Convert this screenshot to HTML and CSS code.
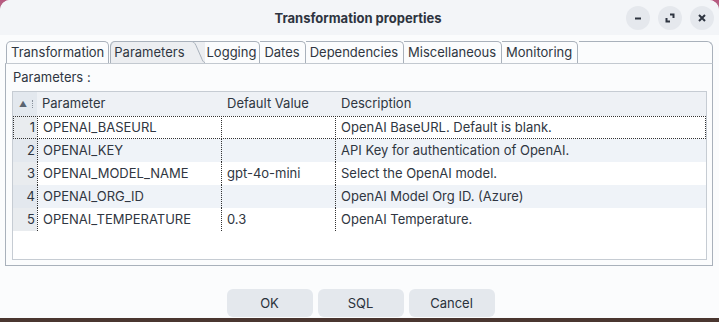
FILE: index.html
```html
<!DOCTYPE html>
<html lang="en">
  <head>
    <meta charset="UTF-8" />
    <title>Transformation properties</title>
    <link rel="stylesheet" href="styles.css">
  </head>
  <body>
    <div class="window">
      <div class="titlebar">
        <span class="title">Transformation properties</span>
        <div class="controls">
          <span class="ctl">
            <svg width="10" height="10" viewBox="0 0 10 10"><path d="M2 5.5h6" stroke="#2e3440" stroke-width="2"/></svg>
          </span>
          <span class="ctl">
            <svg width="10" height="10" viewBox="0 0 10 10"><path d="M5 1.5h3.5v3.5M1.5 5v3.5h3.5" fill="none" stroke="#2e3440" stroke-width="2"/></svg>
          </span>
          <span class="ctl">
            <svg width="10" height="10" viewBox="0 0 10 10"><path d="M2 2l6 6M8 2l-6 6" stroke="#2e3440" stroke-width="2"/></svg>
          </span>
        </div>
      </div>
      <div class="content">
        <div class="tabs">
          <span class="tab first">Transformation</span>
          <span class="tab active">Parameters
            <svg class="slant" width="20" height="22" viewBox="0 0 20 22"><path d="M0 0.5h6c2.5 0 3.5 1 5 4l5.5 12.5c1 2.5 1.8 4.5 3.5 4.5v1h-20z" fill="#eceef1"/><path d="M0 0.5h6c2.5 0 3.5 1 5 4l5.5 12.5c1 2.5 1.8 4.5 3.5 4.5" fill="none" stroke="#a9b1bb"/></svg>
          </span>
          <span class="tab after">Logging</span>
          <span class="tab">Dates</span>
          <span class="tab">Dependencies</span>
          <span class="tab">Miscellaneous</span>
          <span class="tab">Monitoring</span>
          <span class="tab-fill"></span>
        </div>
        <div class="panel">
          <div class="label">Parameters :</div>
          <div class="table">
            <div class="row head">
              <div class="cell num"><span class="arrow">▲</span><span class="sep"></span></div>
              <div class="cell">Parameter</div>
              <div class="cell">Default Value</div>
              <div class="cell">Description</div>
            </div>
            <div class="row selected">
              <div class="cell num">1</div>
              <div class="cell">OPENAI_BASEURL</div>
              <div class="cell"></div>
              <div class="cell">OpenAI BaseURL. Default is blank.</div>
            </div>
            <div class="row">
              <div class="cell num">2</div>
              <div class="cell">OPENAI_KEY</div>
              <div class="cell"></div>
              <div class="cell">API Key for authentication of OpenAI.</div>
            </div>
            <div class="row">
              <div class="cell num">3</div>
              <div class="cell">OPENAI_MODEL_NAME</div>
              <div class="cell">gpt-4o-mini</div>
              <div class="cell">Select the OpenAI model.</div>
            </div>
            <div class="row">
              <div class="cell num">4</div>
              <div class="cell">OPENAI_ORG_ID</div>
              <div class="cell"></div>
              <div class="cell">OpenAI Model Org ID. (Azure)</div>
            </div>
            <div class="row">
              <div class="cell num">5</div>
              <div class="cell">OPENAI_TEMPERATURE</div>
              <div class="cell">0.3</div>
              <div class="cell">OpenAI Temperature.</div>
            </div>
          </div>
        </div>
        <div class="actions">
          <button>OK</button>
          <button>SQL</button>
          <button>Cancel</button>
        </div>
      </div>
    </div>
  </body>
</html>
```

FILE: styles.css
```css
* {
  margin: 0;
  padding: 0;
  box-sizing: border-box;
}
html,
body {
  height: 100%;
}
body {
  background: linear-gradient(180deg, #b8587f 0, #a8a0a8 30px, #4a3630 300px);
  font-family: Inter, "DejaVu Sans", sans-serif;
  font-size: 13px;
  color: #2f3641;
  overflow: hidden;
}
.window {
  width: 719px;
  height: 318px;
  background: #fbfcfd;
  border-radius: 10px 10px 0 0;
  overflow: hidden;
  display: flex;
  flex-direction: column;
}
.titlebar {
  height: 35px;
  background: #f3f5f8;
  display: flex;
  align-items: center;
  justify-content: center;
  position: relative;
}
.title {
  font-weight: 700;
  font-size: 13px;
  color: #2e3440;
  margin-left: -3px;
}
.controls {
  position: absolute;
  right: 5px;
  top: 6px;
  display: flex;
  gap: 8px;
}
.ctl {
  width: 24px;
  height: 24px;
  border-radius: 50%;
  background: #e5e8ed;
  display: flex;
  align-items: center;
  justify-content: center;
}
.content {
  flex: 1;
  display: flex;
  flex-direction: column;
  padding: 6px 6px 0 5px;
}
.tabs {
  display: flex;
  height: 22px;
}
.tab {
  height: 22px;
  line-height: 21px;
  padding: 0 5px 0 4px;
  border-top: 1px solid #a9b1bb;
  border-right: 1px solid #a9b1bb;
  border-top-right-radius: 5px;
  background: #fbfcfd;
  white-space: nowrap;
}
.tab.first {
  border-left: 1px solid #a9b1bb;
  border-top-left-radius: 5px;
  padding-left: 4px;
  padding-right: 4px;
  margin-left: 1px;
  margin-right: 1px;
}
.tab.active {
  display: flex;
  background: #eceef1;
  border-left: 1px solid #a9b1bb;
  border-right: none;
  border-top: none;
  border-top-left-radius: 5px;
  border-top-right-radius: 0;
  padding: 1px 0 0 3px;
  box-shadow: inset 0 1px 0 #a9b1bb;
}
.slant {
  display: block;
  margin-top: -1px;
}
.tab.after {
  padding-left: 2px;
  padding-right: 3px;
}
.tab-fill {
  flex: 1;
  border-top: 1px solid #a9b1bb;
  border-right: 1px solid #a9b1bb;
  border-top-right-radius: 6px;
  margin-left: 1px;
}
.panel {
  border: 1px solid #a9b1bb;
  border-top-color: #c3c9d0;
  background: #fbfcfd;
  padding: 0 5px 5px 6px;
  height: 203px;
}
.label {
  height: 27px;
  line-height: 27px;
  padding-left: 1px;
}
.table {
  border: 1px solid #c6ccd3;
  background: #fff;
  height: 169px;
}
.row {
  display: grid;
  grid-template-columns: 24px 184px 114px 1fr;
  height: 23px;
  line-height: 22px;
}
.row:nth-child(odd) {
  background: #eff3f8;
}
.row.head {
  height: 24px;
  line-height: 23px;
  background: #eef1f5;
}
.cell {
  padding-left: 5px;
  white-space: nowrap;
  border-left: 1px dotted #333;
}
.cell.num {
  border-left: none;
  text-align: right;
  padding: 0 2px 0 0;
  background: #e9ecef;
}
.row:nth-child(odd) .cell.num {
  background: #e3e8ee;
}
.head .cell {
  border-left: none;
  padding-left: 5px;
}
.head .cell:nth-child(3),
.head .cell:nth-child(4) {
  padding-left: 6px;
}
.head .cell.num {
  background: #eef1f5;
  display: flex;
  align-items: center;
  padding: 0;
}
.arrow {
  font-size: 8px;
  color: #5a6470;
  margin-left: 6px;
  line-height: 1;
}
.sep {
  width: 0;
  height: 8px;
  border-left: 1px dotted #8a929c;
  margin-left: 5px;
}
.row.selected {
  outline: 1px dotted #333;
  outline-offset: -1px;
}
.actions {
  display: flex;
  justify-content: center;
  gap: 5px;
  padding-top: 23px;
  padding-left: 3px;
}
button {
  width: 86px;
  height: 28px;
  border: none;
  border-radius: 6px;
  background: #e4e8ed;
  font-family: Inter, "DejaVu Sans", sans-serif;
  font-size: 13px;
  color: #2a313b;
}
```
